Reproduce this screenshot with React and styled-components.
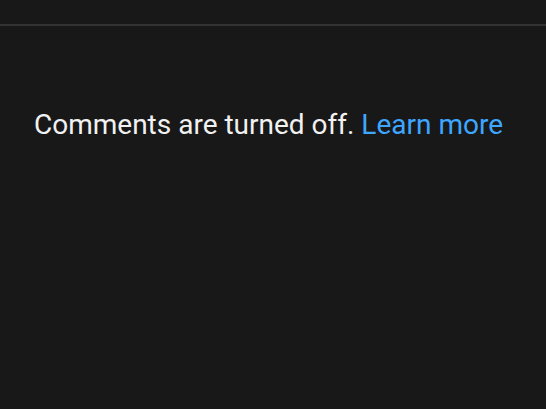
import React from "react";
import styled, { createGlobalStyle } from "styled-components";

const Global = createGlobalStyle`
  html, body { margin: 0; padding: 0; background: #181818; }
  body { font-family: Roboto, "Liberation Sans", sans-serif; }
`;

const Page = styled.div`
  width: 546px;
  height: 409px;
  background: #181818;
  display: flex;
  flex-direction: column;
`;

const TopBar = styled.div`
  height: 24px;
  border-bottom: 2px solid #333333;
`;

const Message = styled.p`
  margin: 0;
  padding: 82px 0 0 34px;
  font-size: 28px;
  line-height: 34px;
  color: #f1f1f1;
  font-weight: 400;
  white-space: nowrap;
`;

const Link = styled.a`
  color: #3ea6ff;
  text-decoration: none;
`;

export default function App() {
  return (
    <Page>
      <Global />
      <TopBar />
      <Message>
        Comments are turned off. <Link href="#">Learn more</Link>
      </Message>
    </Page>
  );
}
